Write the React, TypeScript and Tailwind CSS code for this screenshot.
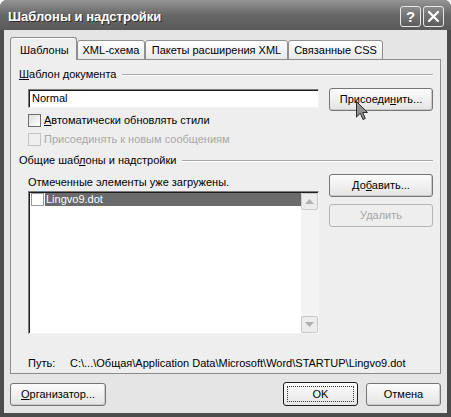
import React from "react";

function Btn({
  children,
  w,
  disabled,
  def,
  className = "",
}: {
  children: React.ReactNode;
  w: string;
  disabled?: boolean;
  def?: boolean;
  className?: string;
}) {
  if (disabled) {
    return (
      <div
        className={`${w} h-[23px] shrink-0 rounded-[3px] border border-[#b4b4b4] bg-[#eeeeee] text-[#a6a6a6] flex items-center justify-center ${className}`}
      >
        {children}
      </div>
    );
  }
  if (def) {
    return (
      <div
        className={`${w} h-[24px] shrink-0 rounded-[3px] border border-[#1c1c1c] bg-linear-to-b from-[#fdfdfd] to-[#e6e6e6] p-[3px] ${className}`}
      >
        <div className="w-full h-full border border-dotted border-[#333] flex items-center justify-center">
          {children}
        </div>
      </div>
    );
  }
  return (
    <div
      className={`${w} h-[23px] shrink-0 rounded-[3px] border border-[#767676] bg-linear-to-b from-[#fcfcfc] to-[#e4e4e4] shadow-[inset_-1px_-1px_0_#c9c9c9] flex items-center justify-center ${className}`}
    >
      {children}
    </div>
  );
}

function Check({ disabled }: { disabled?: boolean }) {
  return (
    <div
      className={`w-[13px] h-[13px] shrink-0 border ${
        disabled ? "border-[#c4c4c4] bg-[#efefef]" : "border-[#6e6e6e] bg-linear-to-br from-[#dedede] to-white"
      }`}
    />
  );
}

function GroupLabel({ children }: { children: React.ReactNode }) {
  return (
    <div className="h-[13px] flex items-center">
      <span className="whitespace-nowrap">{children}</span>
      <div className="flex-1 ml-[6px] h-[2px] border-t border-t-[#a9a9a9] border-b border-b-white" />
    </div>
  );
}

export default function App() {
  return (
    <div className="w-[451px] h-[417px] bg-white font-['Liberation_Sans','DejaVu_Sans',sans-serif] text-[11px] leading-[13px] text-black select-none">
      <div className="relative w-full h-full rounded-t-[7px] bg-[#4c4c4c] flex flex-col overflow-hidden">
        {/* Title bar */}
        <div className="h-[30px] shrink-0 flex items-center pl-[8px] pr-[7px] pt-[3px] bg-linear-to-b from-[#959595] via-[#676767] to-[#5a5a5a]">
          <span className="flex-1 text-white font-bold text-[13px] leading-[16px] [text-shadow:1px_1px_0_#2c2c2c]">
            Шаблоны и надстройки
          </span>
          <div className="flex gap-[2px]">
            <div className="w-[21px] h-[21px] rounded-[3px] border border-[#e8e8e8] bg-linear-to-b from-[#8a8a8a] to-[#5c5c5c] flex items-center justify-center text-white font-bold text-[15px] leading-none">
              ?
            </div>
            <div className="w-[21px] h-[21px] rounded-[3px] border border-[#e8e8e8] bg-linear-to-b from-[#8a8a8a] to-[#5c5c5c] flex items-center justify-center">
              <svg width="11" height="11" viewBox="0 0 11 11">
                <path d="M1 1 L10 10 M10 1 L1 10" stroke="white" strokeWidth="2.2" strokeLinecap="square" />
              </svg>
            </div>
          </div>
        </div>

        {/* Client */}
        <div className="flex-1 mx-[4px] mb-[4px] bg-[#e5e5e5] flex flex-col px-[6px] pt-[7px]">
          {/* Tabs */}
          <div className="h-[23px] flex items-end -mb-px">
            <div className="relative z-10 w-[67px] h-[23px] rounded-t-[3px] border border-b-0 border-[#8c8c8c] bg-[#eeeeee] shadow-[inset_0_1px_0_#ffffff] flex items-start pt-[6px] pl-[9px]">
              Шаблоны
            </div>
            <div className="w-[68px] h-[20px] rounded-t-[3px] border border-[#8f8f8f] bg-linear-to-b from-white to-[#e8e8e8] flex items-start justify-center pt-[3px]">
              XML-схема
            </div>
            <div className="w-[143px] h-[20px] rounded-t-[3px] border border-[#8f8f8f] bg-linear-to-b from-white to-[#e8e8e8] flex items-start justify-center pt-[3px]">
              Пакеты расширения XML
            </div>
            <div className="w-[95px] h-[20px] rounded-t-[3px] border border-[#8f8f8f] bg-linear-to-b from-white to-[#e8e8e8] flex items-start justify-center pt-[3px]">
              Связанные CSS
            </div>
          </div>

          {/* Panel */}
          <div className="h-[315px] shrink-0 border border-[#8c8c8c] bg-[#eeeeee] flex flex-col pl-[8px] pr-[7px] pt-[8px]">
            <GroupLabel>
              <span className="underline">Ш</span>аблон документа
            </GroupLabel>

            <div className="mt-[7px] h-[23px] flex items-start">
              <div className="ml-[9px] mt-[1px] w-[291px] h-[19px] bg-white border border-t-[#7c7c7c] border-l-[#7c7c7c] border-r-[#f4f4f4] border-b-[#f4f4f4] shadow-[inset_1px_1px_0_#1e1e1e] flex items-center pl-[3px]">
                Normal
              </div>
              <Btn w="w-[104px]" className="ml-[10px]">
                <span>
                  Присоеди<span className="underline">н</span>ить...
                </span>
              </Btn>
            </div>

            <div className="mt-[3px] ml-[9px] h-[13px] flex items-center gap-[3px]">
              <Check />
              <span>
                <span className="underline">А</span>втоматически обновлять стили
              </span>
            </div>

            <div className="mt-[6px] ml-[9px] h-[13px] flex items-center gap-[3px] text-[#a8a8a8]">
              <Check disabled />
              <span>Присоединять к новым сообщениям</span>
            </div>

            <div className="mt-[8px]">
              <GroupLabel>
                Общие шаб<span className="underline">л</span>оны и надстройки
              </GroupLabel>
            </div>

            <div className="mt-[7px] flex items-start">
              <div className="ml-[9px] w-[291px] flex flex-col">
                <div className="mt-[2px] h-[13px] flex items-center">Отмеченные элементы уже загружены.</div>
                <div className="mt-[2px] h-[143px] bg-white border border-t-[#7c7c7c] border-l-[#7c7c7c] border-r-[#f4f4f4] border-b-[#f4f4f4] shadow-[inset_1px_1px_0_#1e1e1e] flex pt-[1px] pl-[1px]">
                  <div className="flex-1 flex flex-col">
                    <div className="h-[13px] flex items-center">
                      <div className="ml-[1px] w-[13px] h-[13px] border border-[#9a9a9a] bg-white" />
                      <div className="ml-[1px] flex-1 h-[13px] bg-[#6a6a6a] text-white flex items-center pl-[1px]">
                        Lingvo9.dot
                      </div>
                    </div>
                  </div>
                  <div className="w-[17px] bg-[#f3f3f3] flex flex-col justify-between">
                    <div className="h-[17px] border border-[#c9c9c9] bg-[#ececec] rounded-[2px] flex items-center justify-center">
                      <svg width="9" height="5" viewBox="0 0 9 5">
                        <path d="M0 5 L4.5 0 L9 5 Z" fill="#b0b0b0" />
                      </svg>
                    </div>
                    <div className="h-[17px] border border-[#c9c9c9] bg-[#ececec] rounded-[2px] flex items-center justify-center">
                      <svg width="9" height="5" viewBox="0 0 9 5">
                        <path d="M0 0 L4.5 5 L9 0 Z" fill="#b0b0b0" />
                      </svg>
                    </div>
                  </div>
                </div>
              </div>
              <div className="ml-[10px] flex flex-col">
                <Btn w="w-[104px]">
                  <span>
                    До<span className="underline">б</span>авить...
                  </span>
                </Btn>
                <Btn w="w-[104px]" disabled className="mt-[7px]">
                  Удалить
                </Btn>
              </div>
            </div>

            <div className="mt-[23px] ml-[9px] h-[13px] flex items-center whitespace-nowrap">
              <span className="w-[42px]">Путь:</span>
              <span>C:\...\Общая\Application Data\Microsoft\Word\STARTUP\Lingvo9.dot</span>
            </div>
          </div>

          {/* Bottom buttons */}
          <div className="mt-[9px] flex items-start justify-between">
            <Btn w="w-[96px]">
              <span>
                <span className="underline">О</span>рганизатор...
              </span>
            </Btn>
            <div className="flex gap-[8px]">
              <Btn w="w-[75px]" def className="-mt-px">
                OK
              </Btn>
              <Btn w="w-[75px]">Отмена</Btn>
            </div>
          </div>
        </div>

        {/* Mouse cursor */}
        <svg className="absolute left-[356px] top-[101px]" width="13" height="20" viewBox="0 0 13 20">
          <path
            d="M0.5 0.5 L0.5 16 L4.3 12.3 L7 18.5 L9.3 17.5 L6.7 11.5 L11.5 11.5 Z"
            fill="#8f8f8f"
            stroke="#2a2a2a"
            strokeWidth="1"
            strokeLinejoin="miter"
          />
        </svg>
      </div>
    </div>
  );
}
